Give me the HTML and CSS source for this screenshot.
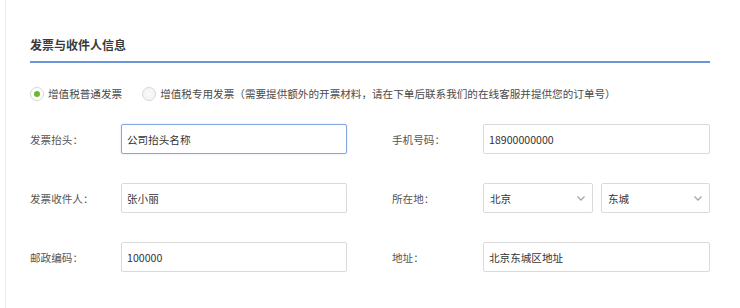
FILE: index.html
```html
<!DOCTYPE html>
<html lang="zh-CN">
<head>
<meta charset="utf-8">
<link rel="stylesheet" href="styles.css">
</head>
<body>
<div class="panel">
  <h2 class="title">发票与收件人信息</h2>
  <div class="radios">
    <label class="radio"><span class="dot on"></span><span>增值税普通发票</span></label>
    <label class="radio"><span class="dot"></span><span>增值税专用发票<span class="p">（</span>需要提供额外的开票材料<span class="c">，</span>请在下单后联系我们的在线客服并提供您的订单号<span class="p">）</span></span></label>
  </div>
  <div class="form">
    <div class="field">
      <span class="lbl">发票抬头<span class="c">：</span></span>
      <div class="input focus">公司抬头名称</div>
    </div>
    <div class="field">
      <span class="lbl">手机号码<span class="c">：</span></span>
      <div class="input">18900000000</div>
    </div>
    <div class="field">
      <span class="lbl">发票收件人<span class="c">：</span></span>
      <div class="input">张小丽</div>
    </div>
    <div class="field">
      <span class="lbl">所在地<span class="c">：</span></span>
      <div class="selects">
        <div class="input select"><span>北京</span><svg width="8" height="5" viewBox="0 0 8 5"><polyline points="0.5,0.5 4,4 7.5,0.5" fill="none" stroke="#a9a9a9" stroke-width="1.4"/></svg></div>
        <div class="input select"><span>东城</span><svg width="8" height="5" viewBox="0 0 8 5"><polyline points="0.5,0.5 4,4 7.5,0.5" fill="none" stroke="#a9a9a9" stroke-width="1.4"/></svg></div>
      </div>
    </div>
    <div class="field">
      <span class="lbl">邮政编码<span class="c">：</span></span>
      <div class="input">100000</div>
    </div>
    <div class="field">
      <span class="lbl">地址<span class="c">：</span></span>
      <div class="input">北京东城区地址</div>
    </div>
  </div>
</div>
</body>
</html>
```
FILE: styles.css
```css
html, body {
  margin: 0;
  padding: 0;
  background: #fff;
}
body {
  font-family: "Noto Sans CJK SC", "Noto Sans", sans-serif;
  font-size: 10.6px;
  color: #444;
}
.panel {
  margin-left: 5px;
  border-left: 1px solid #ebebeb;
  height: 308px;
  box-sizing: border-box;
  padding: 37px 30px 0 24px;
  width: 735px;
}
.title {
  margin: 0;
  font-size: 12px;
  line-height: 16px;
  font-weight: bold;
  color: #3a3a3a;
  padding-bottom: 8px;
  border-bottom: 2px solid #6b94d9;
}
.radios {
  display: flex;
  gap: 20px;
  margin-top: 24px;
  height: 14px;
  align-items: center;
}
.radio {
  display: flex;
  align-items: center;
  gap: 4px;
  color: #4a4a4a;
  line-height: 14px;
}
.c {
  font-family: "Noto Sans CJK TC", sans-serif;
}
.p {
  display: inline-block;
  width: 1em;
  text-align: center;
}
.dot {
  width: 14px;
  height: 14px;
  box-sizing: border-box;
  border-radius: 50%;
  border: 1px solid #d6d6d6;
  background: radial-gradient(circle, #fafafa 0, #f1f1f1 100%);
  position: relative;
  flex: none;
}
.dot.on {
  background: #fff;
}
.dot.on::after {
  content: "";
  position: absolute;
  left: 3px;
  top: 3px;
  width: 6px;
  height: 6px;
  border-radius: 50%;
  background: #6cb82f;
}
.form {
  margin-top: 23px;
  display: grid;
  grid-template-columns: 317px 318px;
  column-gap: 45px;
  row-gap: 29px;
}
.field {
  display: flex;
  align-items: center;
  height: 30px;
}
.lbl {
  width: 91px;
  flex: none;
  color: #555;
}
.input {
  flex: 1;
  height: 30px;
  box-sizing: border-box;
  border: 1px solid #dadada;
  border-radius: 2px;
  padding: 0 6px 0 5px;
  display: flex;
  align-items: center;
  color: #333;
  font-size: 10.6px;
  background: #fff;
}
.input.focus {
  border-color: #86a6df;
  box-shadow: 0 0 2px rgba(110, 150, 220, 0.35);
}
.selects {
  flex: 1;
  display: flex;
  gap: 8px;
}
.select {
  justify-content: space-between;
  padding: 0 7px 0 6px;
}
.select:first-child {
  flex: 0 0 110px;
}
```
